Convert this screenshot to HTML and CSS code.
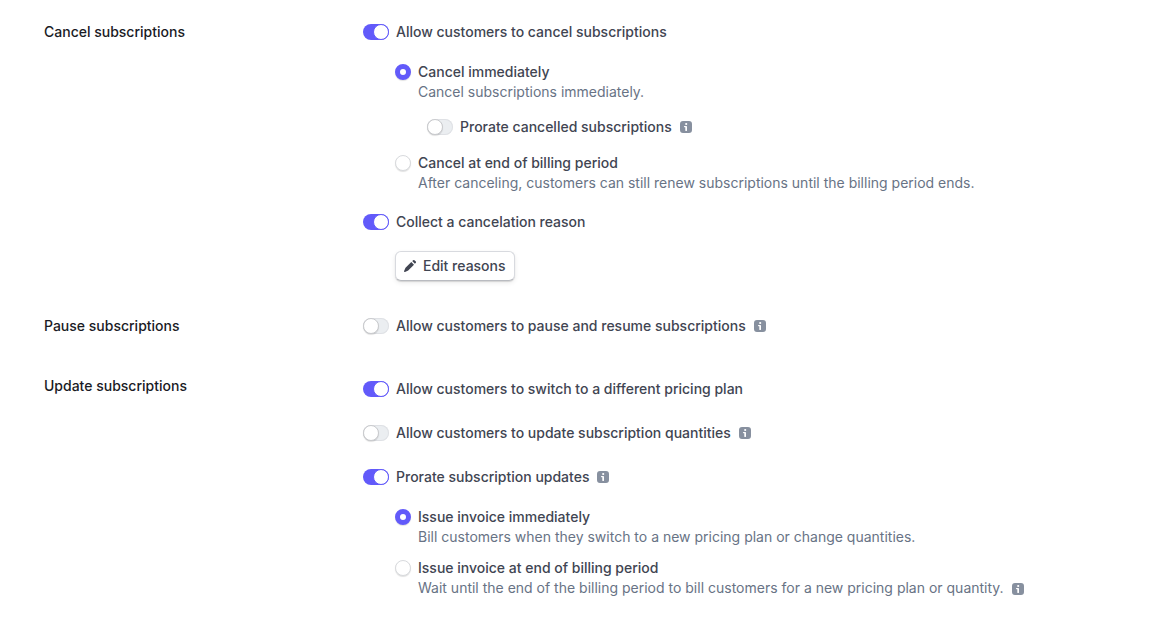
FILE: index.html
```html
<!DOCTYPE html>
<html lang="en">
<head>
<meta charset="utf-8">
<meta name="viewport" content="width=device-width, initial-scale=1">
<title>Subscription settings</title>
<link rel="stylesheet" href="styles.css">
</head>
<body>
<svg class="sprite" aria-hidden="true">
  <symbol id="info" viewBox="0 0 12 12">
    <path fill-rule="evenodd" d="M3 0h6a3 3 0 0 1 3 3v6a3 3 0 0 1-3 3H3a3 3 0 0 1-3-3V3a3 3 0 0 1 3-3zM6.200 1.900a1.100 1.100 0 1 0 0 2.200 1.100 1.100 0 0 0 0-2.200zM4.600 4.900a.7.7 0 0 0 0 1.400H5.300V9.200a.85.85 0 0 0 1.700 0V5.700a.8.8 0 0 0-.8-.8z"/>
  </symbol>
</svg>
<main class="settings">
  <section class="section">
    <h2 class="section-title">Cancel subscriptions</h2>
    <div class="section-body">
      <div class="row">
        <input class="toggle" type="checkbox" role="switch" id="allow-cancel" checked>
        <label class="label" for="allow-cancel">Allow customers to cancel subscriptions</label>
      </div>
      <div class="nested options">
        <div class="option">
          <div class="row">
            <input class="radio" type="radio" name="cancel-mode" id="cancel-now" checked>
            <label class="label" for="cancel-now">Cancel immediately</label>
          </div>
          <p class="hint">Cancel subscriptions immediately.</p>
        </div>
        <div class="row nested">
          <input class="toggle" type="checkbox" role="switch" id="prorate-cancel">
          <label class="label" for="prorate-cancel">Prorate cancelled subscriptions</label>
          <svg class="info" role="img" aria-label="Info"><use href="#info"/></svg>
        </div>
        <div class="option">
          <div class="row">
            <input class="radio" type="radio" name="cancel-mode" id="cancel-end">
            <label class="label" for="cancel-end">Cancel at end of billing period</label>
          </div>
          <p class="hint">After canceling, customers can still renew subscriptions until the billing period ends.</p>
        </div>
      </div>
      <div class="row">
        <input class="toggle" type="checkbox" role="switch" id="collect" checked>
        <label class="label" for="collect">Collect a cancelation reason</label>
      </div>
      <div class="nested row">
        <button class="button" type="button">
          <svg class="pencil" viewBox="0 0 12 12" aria-hidden="true"><path d="M7.300 2 10 4.700 4.200 10.500 1 11.900a.7.7 0 0 1-.9-.9L1.500 7.800zM8.200 1.100 8.900.4a1.300 1.300 0 0 1 1.800 0l.9.9a1.300 1.300 0 0 1 0 1.800l-.7.7z"/></svg>
          Edit reasons
        </button>
      </div>
    </div>
  </section>

  <section class="section">
    <h2 class="section-title">Pause subscriptions</h2>
    <div class="section-body">
      <div class="row">
        <input class="toggle" type="checkbox" role="switch" id="pause">
        <label class="label" for="pause">Allow customers to pause and resume subscriptions</label>
        <svg class="info" role="img" aria-label="Info"><use href="#info"/></svg>
      </div>
    </div>
  </section>

  <section class="section">
    <h2 class="section-title">Update subscriptions</h2>
    <div class="section-body section-body-loose">
      <div class="row">
        <input class="toggle" type="checkbox" role="switch" id="switch-plan" checked>
        <label class="label" for="switch-plan">Allow customers to switch to a different pricing plan</label>
      </div>
      <div class="row">
        <input class="toggle" type="checkbox" role="switch" id="quantities">
        <label class="label" for="quantities">Allow customers to update subscription quantities</label>
        <svg class="info" role="img" aria-label="Info"><use href="#info"/></svg>
      </div>
      <div class="group">
        <div class="row">
          <input class="toggle" type="checkbox" role="switch" id="prorate-update" checked>
          <label class="label" for="prorate-update">Prorate subscription updates</label>
          <svg class="info" role="img" aria-label="Info"><use href="#info"/></svg>
        </div>
        <div class="nested options options-tight">
          <div class="option">
            <div class="row">
              <input class="radio" type="radio" name="invoice" id="invoice-now" checked>
              <label class="label" for="invoice-now">Issue invoice immediately</label>
            </div>
            <p class="hint">Bill customers when they switch to a new pricing plan or change quantities.</p>
          </div>
          <div class="option">
            <div class="row">
              <input class="radio" type="radio" name="invoice" id="invoice-end">
              <label class="label" for="invoice-end">Issue invoice at end of billing period</label>
            </div>
            <p class="hint">Wait until the end of the billing period to bill customers for a new pricing plan or quantity.
              <svg class="info" role="img" aria-label="Info"><use href="#info"/></svg></p>
          </div>
        </div>
      </div>
    </div>
  </section>
</main>
</body>
</html>
```
FILE: styles.css
```css
*,
*::before {
  box-sizing: border-box;
}

body {
  margin: 0;
  background: #fff;
  color: #414552;
  font: 500 14px/20px Inter, "Liberation Sans", sans-serif;
}

.sprite {
  display: none;
}

.settings {
  display: flex;
  flex-direction: column;
  padding: 22px 44px;
}

.section {
  display: grid;
  grid-template-columns: 319px minmax(0, 1fr);
  margin-bottom: 35px;
}

.section + .section {
  margin-bottom: 40px;
}

.section-title {
  margin: 0;
  color: #1a1b25;
  font-size: 14px;
  font-weight: 500;
}

.section-body {
  display: flex;
  flex-direction: column;
  gap: 20px;
}

.section-body-loose {
  gap: 24px;
  padding-top: 3px;
}

.group {
  display: flex;
  flex-direction: column;
  gap: 20px;
}

.nested {
  padding-left: 32px;
}

.options {
  display: flex;
  flex-direction: column;
  gap: 16px;
}

.options-tight {
  gap: 12px;
}

.row {
  display: flex;
  align-items: center;
}

.label {
  padding-left: 7px;
}

.hint {
  margin: 0;
  padding-left: 23px;
  color: #687385;
  font-weight: 400;
  line-height: 19px;
}

.toggle,
.radio {
  appearance: none;
  flex: none;
  height: 16px;
  margin: 0;
}

.toggle {
  display: flex;
  width: 26px;
  border-radius: 8px;
  background: #ebeef1;
  box-shadow: inset 0 0 0 1px #dfe1e5;
}

.toggle::before {
  content: "";
  width: 16px;
  height: 16px;
  border: 1px solid #c9cacd;
  border-radius: 50%;
  background: #fff;
  box-shadow: 0 1px 1px #0000001f;
}

.toggle:checked {
  justify-content: flex-end;
  background: #625afa;
  box-shadow: none;
}

.toggle:checked::before {
  border-color: #625afa;
  box-shadow: none;
}

.radio {
  width: 16px;
  border: 1px solid #d8dadd;
  border-radius: 50%;
  background: #fff;
  box-shadow: 0 1px 1px #0000001f;
}

.radio:checked {
  border: 5px solid #625afa;
}

.info {
  flex: none;
  width: 12px;
  height: 12px;
  margin-left: 8px;
  fill: #87909f;
}

.hint .info {
  margin-left: 4px;
  vertical-align: -2px;
}

.button {
  display: flex;
  align-items: center;
  gap: 7px;
  height: 30px;
  margin: -1px 0 0;
  padding: 0 8px;
  border: 1px solid #d8dadf;
  border-bottom-color: #b9bbc0;
  border-radius: 6px;
  background: #fff;
  box-shadow: 0 1px 1px #0000001f, 0 2px 5px #00000014;
  color: inherit;
  font: inherit;
}

.pencil {
  width: 12px;
  height: 12px;
  fill: #414552;
}
```
